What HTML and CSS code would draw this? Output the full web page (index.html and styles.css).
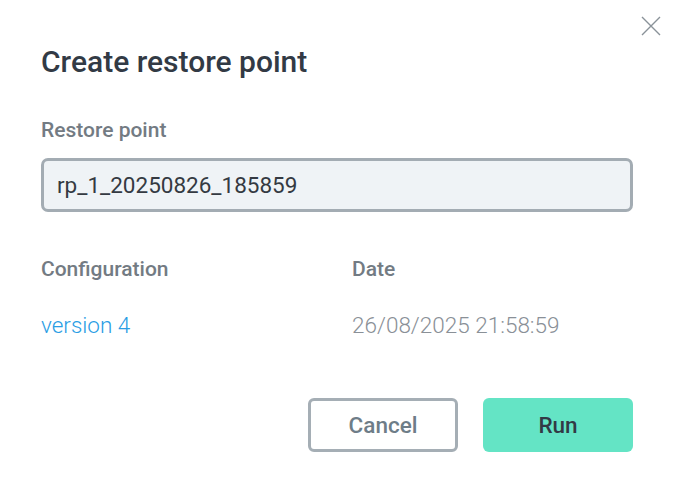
FILE: index.html
```html
<!DOCTYPE html>
<html>
<head>
<meta charset="utf-8">
<link rel="stylesheet" href="styles.css">
</head>
<body>
<div class="dialog">
  <button class="close" aria-label="Close">
    <svg width="20" height="20" viewBox="0 0 20 20"><path d="M1 1L19 19M19 1L1 19" stroke="#8a9299" stroke-width="1.4" fill="none"/></svg>
  </button>
  <h1 class="title">Create restore point</h1>
  <label class="label">Restore point</label>
  <div class="input">rp_1_20250826_185859</div>
  <div class="grid">
    <div class="label">Configuration</div>
    <div class="label">Date</div>
    <a class="link">version 4</a>
    <div class="value">26/08/2025 21:58:59</div>
  </div>
  <div class="actions">
    <button class="btn cancel">Cancel</button>
    <button class="btn run">Run</button>
  </div>
</div>
</body>
</html>
```
FILE: styles.css
```css
* { box-sizing: border-box; }
body { margin: 0; background: #fff; font-family: Roboto, "Liberation Sans", sans-serif; }
.dialog { position: relative; width: 675px; height: 489px; padding: 42px 42px 0 41px; }
.close { position: absolute; top: 16px; right: 14px; background: none; border: 0; padding: 0; width: 20px; height: 20px; }
.title { margin: 0; font-size: 30px; font-weight: 500; color: #323a45; line-height: 40px; }
.label { display: block; font-size: 21px; font-weight: 500; color: #737b83; line-height: 24px; }
.dialog > .label { margin-top: 36px; }
.input { margin-top: 16px; height: 54px; border: 3px solid #a3acb3; border-radius: 7px; background: #eff3f6; padding: 0 13px; display: flex; align-items: center; font-size: 22.5px; color: #343a42; }
.grid { display: grid; grid-template-columns: 311px 1fr; row-gap: 32px; margin-top: 45px; }
.link { font-size: 22.5px; color: #2a9de4; font-weight: 300; line-height: 24px; }
.value { font-size: 22.5px; color: #8a9097; font-weight: 300; line-height: 24px; }
.actions { display: flex; justify-content: flex-end; gap: 25px; margin-top: 61px; }
.btn { width: 150px; height: 54px; border-radius: 6px; font-family: Roboto, "Liberation Sans", sans-serif; font-size: 22.5px; font-weight: 500; }
.cancel { background: #fff; border: 3px solid #a5aeb5; color: #6e7d88; }
.run { background: #64e4c5; border: 0; color: #323a45; }
```
